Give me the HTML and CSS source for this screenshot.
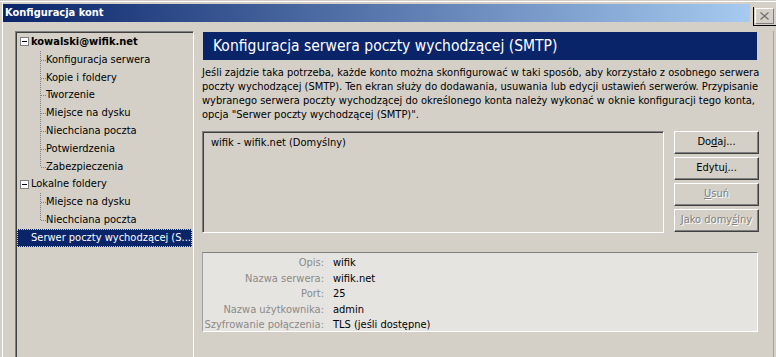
FILE: index.html
```html
<!DOCTYPE html>
<html lang="pl">
<head>
    <meta charset="UTF-8">
    <title>Konfiguracja kont</title>
    <link rel="stylesheet" href="styles.css">
</head>
<body>
    <div class="top">
        <div class="titlebar">Konfiguracja kont</div>
        <div class="closebox">
            <div class="closebtn">
                <svg width="9" height="8" viewBox="0 0 9 8"><path d="M0.5 0.5 L8.5 7.5 M8.5 0.5 L0.5 7.5" stroke="#6b6b6b" stroke-width="1.2" fill="none"/></svg>
            </div>
        </div>
    </div>

    <div class="main">
        <div class="tree">
            <div class="node root bold"><span class="toggle"></span>kowalski@wifik.net</div>
            <div class="group">
                <div class="node child">Konfiguracja serwera</div>
                <div class="node child">Kopie i foldery</div>
                <div class="node child">Tworzenie</div>
                <div class="node child">Miejsce na dysku</div>
                <div class="node child">Niechciana poczta</div>
                <div class="node child">Potwierdzenia</div>
                <div class="node child">Zabezpieczenia</div>
            </div>
            <div class="node root"><span class="toggle"></span>Lokalne foldery</div>
            <div class="group">
                <div class="node child">Miejsce na dysku</div>
                <div class="node child">Niechciana poczta</div>
            </div>
            <div class="node root selected"><span class="label">Serwer poczty wychodzącej (S...</span></div>
        </div>

        <div class="panel">
            <div class="banner">Konfiguracja serwera poczty wychodzącej (SMTP)</div>
            <p class="desc">Jeśli zajdzie taka potrzeba, każde konto można skonfigurować w taki sposób, aby korzystało z osobnego serwera<br>poczty wychodzącej (SMTP). Ten ekran służy do dodawania, usuwania lub edycji ustawień serwerów. Przypisanie<br>wybranego serwera poczty wychodzącej do określonego konta należy wykonać w oknie konfiguracji tego konta,<br>opcja "Serwer poczty wychodzącej (SMTP)".</p>

            <div class="listrow">
                <div class="list">
                    <div class="item">wifik - wifik.net (Domyślny)</div>
                </div>
                <div class="buttons">
                    <div class="btn">Do<u>d</u>aj...</div>
                    <div class="btn">Edytu<u>j</u>...</div>
                    <div class="btn disabled"><u>U</u>suń</div>
                    <div class="btn disabled">Jako domy<u>ś</u>lny</div>
                </div>
            </div>

            <div class="details">
                <span class="key">Opis:</span><span class="val">wifik</span>
                <span class="key">Nazwa serwera:</span><span class="val">wifik.net</span>
                <span class="key">Port:</span><span class="val">25</span>
                <span class="key">Nazwa użytkownika:</span><span class="val">admin</span>
                <span class="key">Szyfrowanie połączenia:</span><span class="val">TLS (jeśli dostępne)</span>
            </div>
        </div>

        <div class="edge"></div>
    </div>
</body>
</html>
```

FILE: styles.css
```css
body {
    margin: 0;
    width: 776px;
    height: 357px;
    overflow: hidden;
    background: linear-gradient(to right, #d4d0c8 2px, #fff 2px 3px, #d4d0c8 3px);
    font-family: "DejaVu Sans Condensed", "DejaVu Sans", sans-serif;
    font-stretch: condensed;
    font-size: 11px;
    color: #000;
}
.top {
    display: flex;
    align-items: flex-start;
    height: 31px;
    background: linear-gradient(#d4d0c8 1px, #fff 1px 2px, transparent 2px);
}
.titlebar {
    margin: 4px 0 0 3px;
    width: 747px;
    height: 18px;
    line-height: 18px;
    padding-left: 2px;
    box-sizing: border-box;
    color: #fff;
    font-weight: bold;
    background: linear-gradient(to right, #0a246a, #a6caf0);
}
.closebox {
    margin: 7px 0 0 3px;
    width: 23px;
    height: 19px;
    box-sizing: border-box;
    border-left: 1px solid #000;
    border-bottom: 1px solid #000;
    padding: 1px 2px 1px 1px;
}
.closebtn {
    height: 100%;
    display: flex;
    align-items: center;
    justify-content: center;
    background: #d4d0c8;
    border: 1px solid;
    border-color: #fff #808080 #808080 #fff;
    box-sizing: border-box;
}
.main {
    display: flex;
    align-items: flex-start;
    padding-left: 15px;
}
.tree {
    width: 179px;
    height: 340px;
    box-sizing: border-box;
    border: 1px solid;
    border-color: #808080 #fff #fff #808080;
    box-shadow: inset 1px 1px #404040, inset -1px -1px #d4d0c8;
    padding: 1px;
}
.node {
    height: 17.8px;
    line-height: 17.8px;
    white-space: nowrap;
    position: relative;
}
.root {
    display: flex;
    align-items: center;
    padding-left: 3px;
}
.bold {
    font-weight: bold;
}
.toggle {
    width: 9px;
    height: 9px;
    box-sizing: border-box;
    border: 1px solid #808080;
    background: #fff linear-gradient(#000, #000) center / 5px 1px no-repeat;
    margin-right: 2px;
}
.selected {
    padding-left: 0;
}
.selected .label {
    flex: 1;
    height: 100%;
    padding-left: 14px;
    background: #0a246a;
    color: #fff;
    outline: 1px dotted #e8d080;
    outline-offset: -1px;
}
.group {
    position: relative;
}
.group::before {
    content: "";
    position: absolute;
    left: 23px;
    top: 0;
    bottom: 9px;
    border-left: 1px dotted #808080;
}
.child {
    padding-left: 29px;
}
.child::before {
    content: "";
    position: absolute;
    left: 24px;
    top: 9px;
    width: 5px;
    border-top: 1px dotted #808080;
}
.panel {
    margin-left: 8px;
    width: 557px;
}
.banner {
    margin: 1px 0 0 1px;
    width: 554px;
    height: 28px;
    line-height: 28px;
    padding-left: 10px;
    box-sizing: border-box;
    background: #0a246a;
    color: #fff;
    font-size: 15.5px;
}
.desc {
    margin: 6px 0 0;
    line-height: 14px;
    white-space: nowrap;
}
.listrow {
    display: flex;
    margin-top: 9px;
}
.list {
    width: 462px;
    height: 102px;
    box-sizing: border-box;
    border: 1px solid;
    border-color: #808080 #fff #fff #808080;
    box-shadow: inset 1px 1px #404040, inset -1px -1px #d4d0c8;
    padding: 3px 0 0 8px;
}
.item {
    line-height: 15px;
}
.buttons {
    margin-left: 10px;
    display: flex;
    flex-direction: column;
    gap: 3px;
}
.btn {
    width: 85px;
    height: 23px;
    line-height: 20px;
    box-sizing: border-box;
    text-align: center;
    border: 1px solid;
    border-color: #fff #404040 #404040 #fff;
    box-shadow: inset -1px -1px #808080;
}
.btn.disabled {
    color: #808080;
    text-shadow: 1px 1px #fff;
}
.details {
    margin-top: 19px;
    width: 556px;
    height: 80px;
    overflow: hidden;
    box-sizing: border-box;
    border: 1px solid;
    border-color: #808080 #fff #fff #a0a0a0;
    background: #e6e4e0;
    padding-top: 2px;
    display: grid;
    grid-template-columns: 121px 1fr;
    column-gap: 9px;
    grid-auto-rows: 15.6px;
    line-height: 15.6px;
}
.key {
    text-align: right;
    color: #8a8a8a;
}
.edge {
    margin-left: 14px;
    width: 1px;
    height: 330px;
    background: #a8a6a0;
}
```
